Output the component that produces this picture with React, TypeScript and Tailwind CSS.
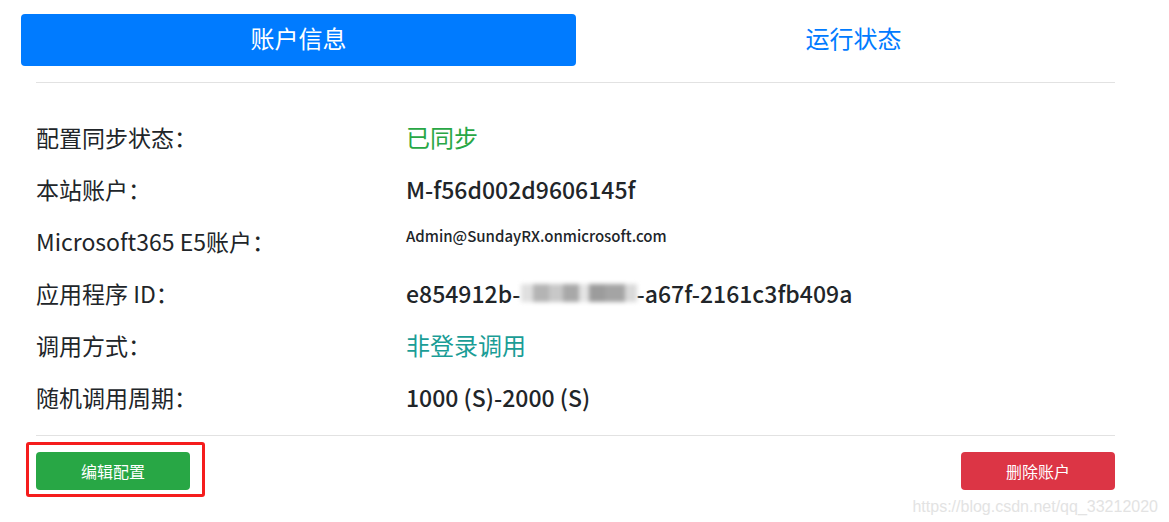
const font = { fontFamily: '"Noto Sans CJK SC", "Open Sans", sans-serif' };

const rows = [
  { label: "配置同步状态：", value: "已同步", cls: "text-[24px] text-[#28a745] font-normal" },
  { label: "本站账户：", value: "M-f56d002d9606145f", cls: "text-[23px] text-[#212529] font-medium" },
  { label: "Microsoft365 E5账户：", value: "Admin@SundayRX.onmicrosoft.com", cls: "text-[15px] text-[#212529] mb-[10px] font-medium" },
  { label: "应用程序 ID：", value: "appid", cls: "text-[23px] text-[#212529] font-medium" },
  { label: "调用方式：", value: "非登录调用", cls: "text-[24px] text-[#1a9d96] font-normal" },
  { label: "随机调用周期：", value: "1000 (S)-2000 (S)", cls: "text-[23px] text-[#212529] font-medium" },
];

const App = () => {
  return (
    <div className="relative w-[1169px] h-[522px] bg-white overflow-hidden" style={font}>
      {/* Tabs */}
      <div className="flex pl-[21px] pt-[14px] w-[1131px]">
        <div className="flex-1 h-[52px] pb-[5px] bg-[#007bff] rounded-[4px] flex items-center justify-center text-white text-[24px]">
          账户信息
        </div>
        <div className="flex-1 h-[52px] pb-[5px] flex items-center justify-center text-[#007bff] text-[24px]">
          运行状态
        </div>
      </div>

      <div className="mx-[36px] w-[1079px]">
        <div className="mt-[16px] border-t border-[#e2e2e2]" />

        {/* Info rows */}
        <div className="pt-[28px] pb-[12px]">
          {rows.map((r) => (
            <div key={r.label} className="flex items-center h-[52px]">
              <div className="w-[370px] text-[23px] text-[#212529]">{r.label}</div>
              {r.value === "appid" ? (
                <div className={`flex items-center ${r.cls}`}>
                  <span>e854912b-</span>
                  <span className="flex items-center h-[22px] blur-[2px]">
                    <span className="w-[12px] h-[18px] bg-[#e0e0e0]" />
                    <span className="w-[16px] h-[18px] bg-[#b4b4b4]" />
                    <span className="w-[14px] h-[18px] bg-[#c8c8c8]" />
                    <span className="w-[16px] h-[18px] bg-[#a8a8a8]" />
                    <span className="w-[10px] h-[18px] bg-[#e4e4e4]" />
                    <span className="w-[16px] h-[18px] bg-[#9c9c9c]" />
                    <span className="w-[20px] h-[18px] bg-[#a4a4a4]" />
                    <span className="w-[12px] h-[18px] bg-[#dadada]" />
                  </span>
                  <span>-a67f-2161c3fb409a</span>
                </div>
              ) : (
                <div className={r.cls}>{r.value}</div>
              )}
            </div>
          ))}
        </div>

        <div className="border-t border-[#e2e2e2]" />

        {/* Actions */}
        <div className="flex justify-between pt-[16px]">
          <div className="relative">
            <button className="w-[154px] h-[38px] rounded-[4px] bg-[#28a745] text-white text-[16px]" style={font}>
              编辑配置
            </button>
            <span className="absolute left-[-10px] top-[-10px] w-[179px] h-[55px] border-[3px] border-[#f51c1c] rounded-[3px]" />
          </div>
          <button className="w-[154px] h-[38px] rounded-[4px] bg-[#dc3545] text-white text-[16px]" style={font}>
            删除账户
          </button>
        </div>
      </div>

      {/* watermark */}
      <div
        className="absolute right-[11px] top-[495px] text-[16px] text-[#e3e3e3]"
        style={{ fontFamily: '"Liberation Sans", Arial, sans-serif' }}
      >
        https://blog.csdn.net/qq_33212020
      </div>
    </div>
  );
};

export default App;
